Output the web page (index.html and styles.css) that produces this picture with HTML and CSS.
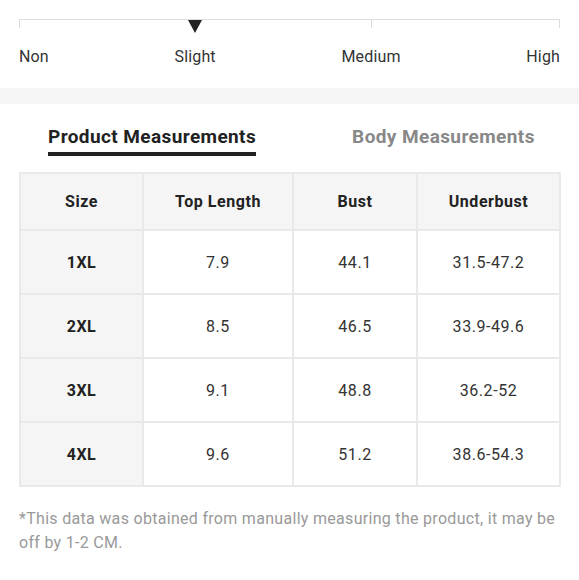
FILE: index.html
```html
<!DOCTYPE html>
<html>
<head>
<meta charset="utf-8">
<link rel="stylesheet" href="styles.css">
</head>
<body>
<div class="fit">
  <div class="scale">
    <div class="stop first"><span class="tick"></span><span class="label">Non</span></div>
    <div class="stop mid"><span class="marker"></span><span class="label">Slight</span></div>
    <div class="stop mid"><span class="tick"></span><span class="label">Medium</span></div>
    <div class="stop last"><span class="tick"></span><span class="label">High</span></div>
  </div>
</div>
<div class="band"></div>
<div class="tabs">
  <div class="tab active">Product Measurements</div>
  <div class="tab">Body Measurements</div>
</div>
<div class="table">
  <div class="cell head">Size</div>
  <div class="cell head">Top Length</div>
  <div class="cell head">Bust</div>
  <div class="cell head">Underbust</div>

  <div class="cell size">1XL</div>
  <div class="cell">7.9</div>
  <div class="cell">44.1</div>
  <div class="cell">31.5-47.2</div>

  <div class="cell size">2XL</div>
  <div class="cell">8.5</div>
  <div class="cell">46.5</div>
  <div class="cell">33.9-49.6</div>

  <div class="cell size">3XL</div>
  <div class="cell">9.1</div>
  <div class="cell">48.8</div>
  <div class="cell">36.2-52</div>

  <div class="cell size">4XL</div>
  <div class="cell">9.6</div>
  <div class="cell">51.2</div>
  <div class="cell">38.6-54.3</div>
</div>
<p class="note">*This data was obtained from manually measuring the product, it may be off by 1-2 CM.</p>
</body>
</html>
```

FILE: styles.css
```css
html, body {
  margin: 0;
  padding: 0;
  background: #fff;
}
body {
  font-family: Roboto, "Liberation Sans", Arial, sans-serif;
  color: #333;
  width: 579px;
}
.fit {
  padding: 19px 19px 0 19px;
}
.scale {
  display: flex;
  justify-content: space-between;
  border-top: 1px solid #dcdcdc;
}
.stop {
  display: flex;
  flex-direction: column;
  height: 47px;
}
.stop.first { align-items: flex-start; }
.stop.mid { align-items: center; }
.stop.last { align-items: flex-end; }
.tick {
  width: 1px;
  height: 8px;
  background: #dcdcdc;
  margin-bottom: 19px;
}
.marker {
  width: 0;
  height: 0;
  border-left: 7px solid transparent;
  border-right: 7px solid transparent;
  border-top: 13px solid #222;
  margin-bottom: 14px;
}
.label {
  font-size: 16px;
  line-height: 20px;
  color: #333;
  white-space: nowrap;
  letter-spacing: 0.15px;
}
.band {
  margin-top: 21px;
  height: 16px;
  background: #f6f6f6;
}
.tabs {
  display: flex;
  gap: 96px;
  padding: 21px 0 0 48px;
}
.tab {
  font-size: 19px;
  font-weight: 700;
  line-height: 24px;
  letter-spacing: 0.4px;
  color: #888;
  padding-bottom: 3px;
  border-bottom: 4px solid transparent;
  white-space: nowrap;
}
.tab.active {
  color: #222;
  border-bottom-color: #222;
}
.table {
  margin: 16px 0 0 19px;
  width: 542px;
  box-sizing: border-box;
  display: grid;
  grid-template-columns: 121px 148px 122px 141px;
  grid-template-rows: 55px repeat(4, 62px);
  gap: 2px;
  padding: 2px;
  background: #e9e9e9;
}
.cell {
  background: #fff;
  display: flex;
  align-items: center;
  justify-content: center;
  font-size: 16px;
  letter-spacing: 0.55px;
  color: #333;
}
.cell.head {
  background: #f5f5f5;
  font-weight: 700;
  color: #222;
}
.cell.size {
  background: #f5f5f5;
  font-weight: 700;
  color: #222;
}
.note {
  margin: 20px 19px 0 19px;
  font-size: 16px;
  line-height: 24px;
  letter-spacing: 0.3px;
  color: #999;
}
```
